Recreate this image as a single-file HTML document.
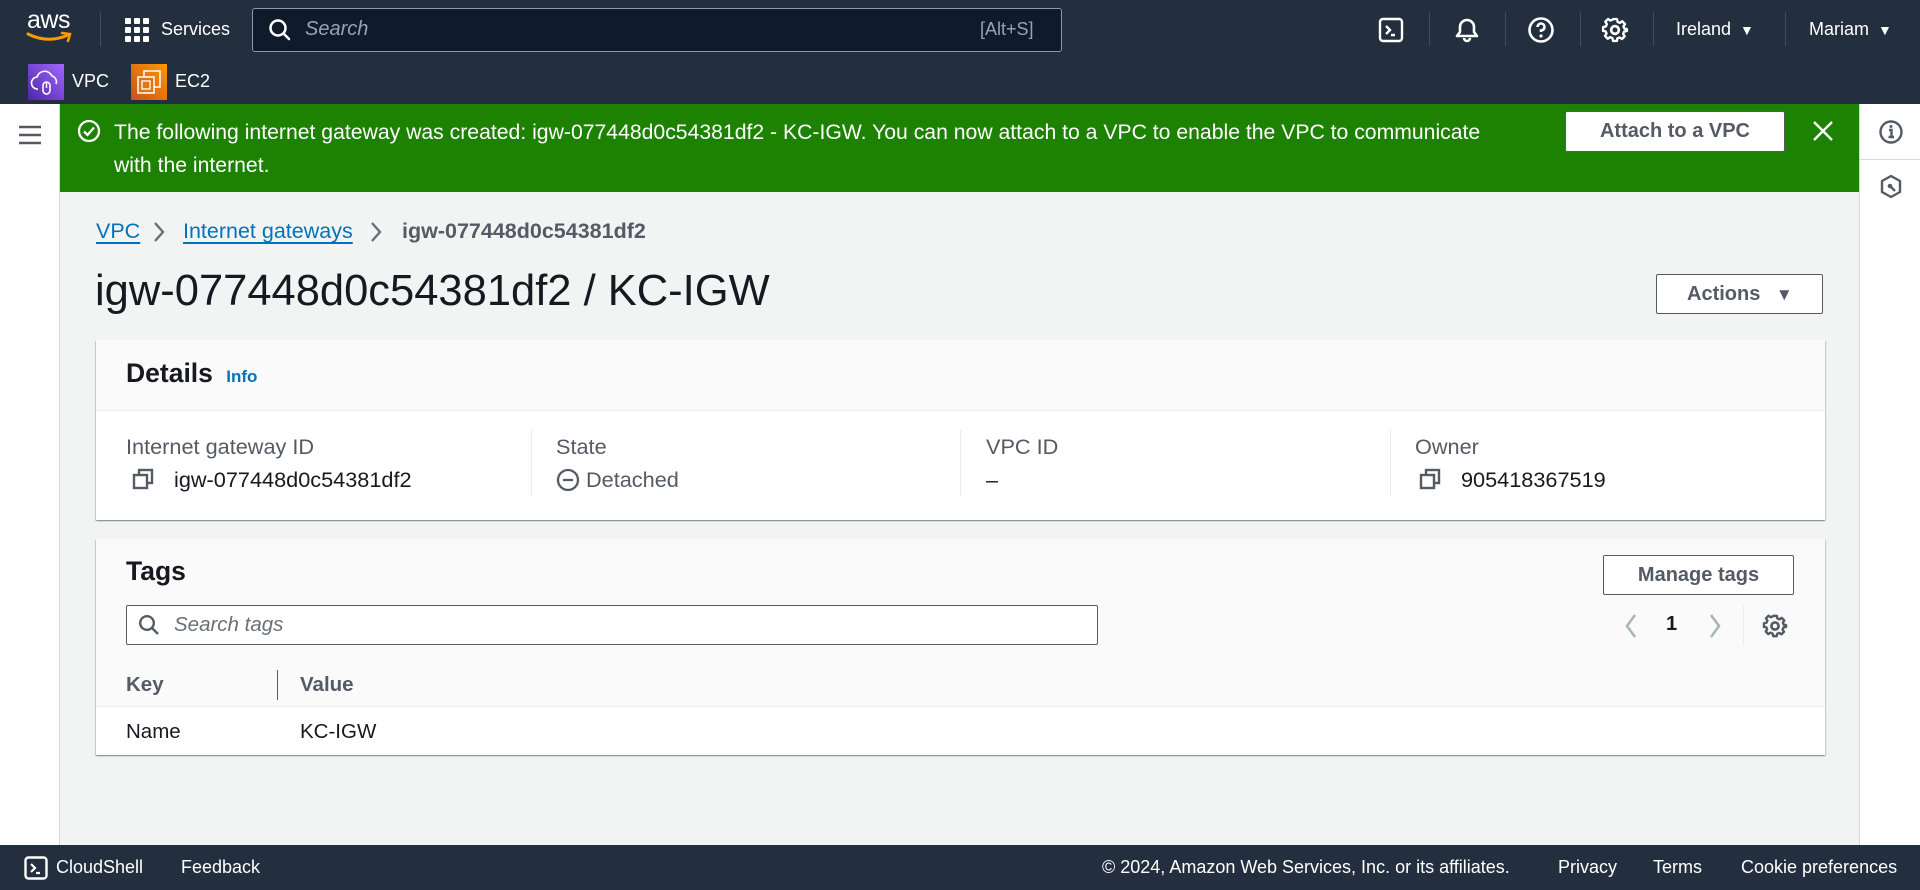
<!DOCTYPE html>
<html><head><meta charset="utf-8"><style>
*{box-sizing:border-box;margin:0;padding:0}
body{width:1920px;height:890px;overflow:hidden;font-family:"Liberation Sans",Arial,sans-serif;background:#f2f3f3;color:#16191f;position:relative}
.a{position:absolute}
.nav{left:0;top:0;width:1920px;height:104px;background:#232f3e}
.nt{color:#fff;font-size:18px;white-space:nowrap}
.div{width:1px;height:34px;background:#414d5c;top:12px}
.lbl{color:#545b64;font-size:21.7px}
.val{font-size:21.7px;color:#16191f}
</style></head><body>
<div class="a nav"></div>
<div class="a nt" style="left:27px;top:6px;font-size:25px;letter-spacing:-0.5px">aws</div>
<svg class="a" style="left:26px;top:30px" width="48" height="16" viewBox="0 0 48 16"><path d="M2 4 Q22 14 42 5" stroke="#ff9900" stroke-width="3" fill="none" stroke-linecap="round"/><path d="M36 3 L44 4 L42 11" stroke="#ff9900" stroke-width="2.5" fill="none" stroke-linecap="round"/></svg>
<div class="a div" style="left:100px"></div>
<svg class="a" style="left:125px;top:18px" width="24" height="24"><g fill="#fff"><rect x="0" y="0" width="6" height="6" rx="1"/><rect x="9" y="0" width="6" height="6" rx="1"/><rect x="18" y="0" width="6" height="6" rx="1"/><rect x="0" y="9" width="6" height="6" rx="1"/><rect x="9" y="9" width="6" height="6" rx="1"/><rect x="18" y="9" width="6" height="6" rx="1"/><rect x="0" y="18" width="6" height="6" rx="1"/><rect x="9" y="18" width="6" height="6" rx="1"/><rect x="18" y="18" width="6" height="6" rx="1"/></g></svg>
<div class="a nt" style="left:161px;top:19px">Services</div>
<div class="a" style="left:252px;top:8px;width:810px;height:44px;background:#0f1b2a;border:1px solid #8d99a8;border-radius:3px"></div>
<svg class="a" style="left:268px;top:18px" width="24" height="24"><circle cx="10" cy="10" r="7.5" stroke="#fff" stroke-width="2.5" fill="none"/><path d="M15.5 15.5 L21 21" stroke="#fff" stroke-width="2.5" stroke-linecap="round"/></svg>
<div class="a nt" style="left:305px;top:18px;font-size:20px;font-style:italic;color:#95a5b5">Search</div>
<div class="a nt" style="left:980px;top:19px;color:#95a5b5">[Alt+S]</div>
<svg class="a" style="left:1378px;top:17px" width="26" height="26"><rect x="2" y="2" width="22" height="22" rx="3" stroke="#fff" stroke-width="2.4" fill="none"/><path d="M8 9 L12 13 L8 17 M13 18 H17" stroke="#fff" stroke-width="2.4" fill="none"/></svg>
<div class="a div" style="left:1429px"></div>
<svg class="a" style="left:1453px;top:15px" width="28" height="30"><path d="M4 21 H24 L21 17 V12 A7 7 0 0 0 7 12 V17 Z" stroke="#fff" stroke-width="2.6" fill="none" stroke-linejoin="round"/><path d="M11 23 A3 3 0 0 0 17 23" stroke="#fff" stroke-width="2.6" fill="none"/></svg>
<div class="a div" style="left:1505px"></div>
<svg class="a" style="left:1527px;top:16px" width="28" height="28"><circle cx="14" cy="14" r="11.5" stroke="#fff" stroke-width="2.6" fill="none"/><path d="M10.5 11 A3.5 3.5 0 1 1 14 14.5 V16" stroke="#fff" stroke-width="2.6" fill="none"/><circle cx="14" cy="20" r="1.6" fill="#fff"/></svg>
<div class="a div" style="left:1580px"></div>
<svg class="a" style="left:1601px;top:16px" width="28" height="28" viewBox="0 0 24 24"><path d="M10 2h4l.6 2.8 2.3 1 2.4-1.6 2.8 2.8-1.6 2.4 1 2.3L24 12l0 2-2.8.6-1 2.3 1.6 2.4-2.8 2.8-2.4-1.6-2.3 1L14 24h-4l-.6-2.8-2.3-1-2.4 1.6-2.8-2.8 1.6-2.4-1-2.3L0 14v-4l2.8-.6 1-2.3-1.6-2.4 2.8-2.8 2.4 1.6 2.3-1z" transform="translate(12 12) scale(.85) translate(-12 -13)" stroke="#fff" stroke-width="2.4" fill="none" stroke-linejoin="round"/><circle cx="12" cy="12" r="3.3" stroke="#fff" stroke-width="2.3" fill="none"/></svg>
<div class="a div" style="left:1653px"></div>
<div class="a nt" style="left:1676px;top:19px">Ireland <span style="font-size:14px;margin-left:4px">▼</span></div>
<div class="a div" style="left:1785px"></div>
<div class="a nt" style="left:1809px;top:19px">Mariam <span style="font-size:14px;margin-left:4px">▼</span></div>
<div class="a" style="left:28px;top:64px;width:36px;height:36px;background:linear-gradient(45deg,#4d27aa,#a166ff)"></div>
<svg class="a" style="left:28px;top:64px" width="36" height="36"><path d="M10 25 A6 6 0 0 1 9 13 A8 8 0 0 1 24 12 A6 6 0 0 1 28 20" stroke="#fff" stroke-width="1.6" fill="none"/><rect x="15" y="18" width="7" height="12" rx="3.5" stroke="#fff" stroke-width="1.6" fill="none"/><path d="M18.5 18 V24" stroke="#fff" stroke-width="1.4"/></svg>
<div class="a nt" style="left:72px;top:71px">VPC</div>
<div class="a" style="left:131px;top:64px;width:36px;height:36px;background:linear-gradient(45deg,#c8511b,#ff9900)"></div>
<svg class="a" style="left:131px;top:64px" width="36" height="36"><rect x="13" y="7" width="16" height="16" stroke="#fff" stroke-width="1.5" fill="none"/><rect x="7" y="13" width="16" height="16" stroke="#fff" stroke-width="1.5" fill="#e07512"/><rect x="11" y="17" width="8" height="8" stroke="#fff" stroke-width="1.3" fill="none"/></svg>
<div class="a nt" style="left:175px;top:71px">EC2</div>
<div class="a" style="left:0;top:104px;width:60px;height:741px;background:#fff;border-right:1px solid #d5dbdb"></div>
<svg class="a" style="left:18px;top:124px" width="24" height="22"><path d="M1 3 H23 M1 11 H23 M1 19 H23" stroke="#545b64" stroke-width="2.6"/></svg>
<div class="a" style="left:1859px;top:104px;width:61px;height:741px;background:#fff;border-left:1px solid #d5dbdb"></div>
<div class="a" style="left:1859px;top:159px;width:61px;height:1px;background:#d5dbdb"></div>
<svg class="a" style="left:1878px;top:119px" width="26" height="26"><circle cx="13" cy="13" r="10.5" stroke="#545b64" stroke-width="2.4" fill="none"/><path d="M11 11 H13.5 V18 M10.5 18 H16" stroke="#545b64" stroke-width="2.4" fill="none"/><circle cx="13" cy="7.5" r="1.5" fill="#545b64"/></svg>
<svg class="a" style="left:1879px;top:174px" width="24" height="26"><path d="M12 2 L21 7 V18 L12 23 L3 18 V7 Z" stroke="#545b64" stroke-width="2.4" fill="none" stroke-linejoin="round"/><circle cx="11" cy="12" r="2.3" fill="#545b64"/><path d="M12 13 L16 17" stroke="#545b64" stroke-width="2.4"/></svg>
<div class="a" style="left:60px;top:104px;width:1799px;height:88px;background:#1d8102"></div>
<svg class="a" style="left:77px;top:119px" width="24" height="24"><circle cx="12" cy="12" r="10" stroke="#fff" stroke-width="2.3" fill="none"/><path d="M7 12.5 L10.5 16 L17 8.5" stroke="#fff" stroke-width="2.3" fill="none"/></svg>
<div class="a" style="left:114px;top:116px;width:1400px;color:#fff;font-size:21.2px;line-height:33px">The following internet gateway was created: igw-077448d0c54381df2 - KC-IGW. You can now attach to a VPC to enable the VPC to communicate with the internet.</div>
<div class="a" style="left:1565px;top:111px;width:220px;height:41px;background:#fff;border:1px solid #545b64;border-radius:2px;color:#545b64;font-weight:bold;font-size:20px;text-align:center;line-height:39px">Attach to a VPC</div>
<svg class="a" style="left:1812px;top:120px" width="22" height="22"><path d="M2 2 L20 20 M20 2 L2 20" stroke="#fff" stroke-width="2.4"/></svg>
<div class="a" style="left:96px;top:219px;font-size:21.5px;color:#0073bb;text-decoration:underline;text-underline-offset:4px">VPC</div>
<svg class="a" style="left:152px;top:221px" width="14" height="22"><path d="M3 2 L11 11 L3 20" stroke="#687078" stroke-width="2.4" fill="none"/></svg>
<div class="a" style="left:183px;top:219px;font-size:21.5px;color:#0073bb;text-decoration:underline;text-underline-offset:4px">Internet gateways</div>
<svg class="a" style="left:369px;top:221px" width="14" height="22"><path d="M3 2 L11 11 L3 20" stroke="#687078" stroke-width="2.4" fill="none"/></svg>
<div class="a" style="left:402px;top:219px;font-size:21.5px;color:#545b64;font-weight:bold">igw-077448d0c54381df2</div>
<div class="a" style="left:95px;top:267px;font-size:43.5px;color:#16191f">igw-077448d0c54381df2 / KC-IGW</div>
<div class="a" style="left:1656px;top:274px;width:167px;height:40px;background:#fff;border:1px solid #545b64;border-radius:2px;color:#545b64;font-weight:bold;font-size:20px;line-height:38px;padding-left:30px">Actions <span style="font-size:17px;margin-left:10px">▼</span></div>
<div class="a" style="left:96px;top:340px;width:1729px;height:180px;background:#fff;box-shadow:0 1px 1px 0 rgba(0,28,36,.3),1px 1px 1px 0 rgba(0,28,36,.15),-1px 1px 1px 0 rgba(0,28,36,.15)">
 <div style="height:71px;background:#fafafa;border-bottom:1px solid #eaeded"></div>
</div>
<div class="a" style="left:126px;top:358px;font-size:26.5px;font-weight:bold">Details <span style="font-size:17px;color:#0073bb;margin-left:6px">Info</span></div>
<div class="a" style="left:531px;top:430px;width:1px;height:66px;background:#eaeded"></div>
<div class="a" style="left:960px;top:430px;width:1px;height:66px;background:#eaeded"></div>
<div class="a" style="left:1390px;top:430px;width:1px;height:66px;background:#eaeded"></div>
<div class="a lbl" style="left:126px;top:434px">Internet gateway ID</div>
<svg class="a" style="left:132px;top:468px" width="22" height="22"><rect x="7" y="2" width="13" height="13" stroke="#545b64" stroke-width="2.4" fill="none"/><rect x="2" y="7" width="13" height="13" stroke="#545b64" stroke-width="2.4" fill="#fff"/></svg>
<div class="a val" style="left:174px;top:467px">igw-077448d0c54381df2</div>
<div class="a lbl" style="left:556px;top:434px">State</div>
<svg class="a" style="left:556px;top:468px" width="24" height="24"><circle cx="12" cy="12" r="10" stroke="#545b64" stroke-width="2.3" fill="none"/><path d="M7 12 H17" stroke="#545b64" stroke-width="2.3"/></svg>
<div class="a" style="left:586px;top:467px;font-size:21.7px;color:#545b64">Detached</div>
<div class="a lbl" style="left:986px;top:434px">VPC ID</div>
<div class="a val" style="left:986px;top:467px">–</div>
<div class="a lbl" style="left:1415px;top:434px">Owner</div>
<svg class="a" style="left:1419px;top:468px" width="22" height="22"><rect x="7" y="2" width="13" height="13" stroke="#545b64" stroke-width="2.4" fill="none"/><rect x="2" y="7" width="13" height="13" stroke="#545b64" stroke-width="2.4" fill="#fff"/></svg>
<div class="a val" style="left:1461px;top:467px">905418367519</div>
<div class="a" style="left:96px;top:539px;width:1729px;height:216px;background:#fff;box-shadow:0 1px 1px 0 rgba(0,28,36,.3),1px 1px 1px 0 rgba(0,28,36,.15),-1px 1px 1px 0 rgba(0,28,36,.15)">
 <div style="height:168px;background:#fafafa;border-bottom:1px solid #eaeded"></div>
</div>
<div class="a" style="left:126px;top:556px;font-size:26.5px;font-weight:bold">Tags</div>
<div class="a" style="left:1603px;top:555px;width:191px;height:40px;background:#fff;border:1px solid #545b64;border-radius:2px;color:#545b64;font-weight:bold;font-size:20px;text-align:center;line-height:38px">Manage tags</div>
<div class="a" style="left:126px;top:605px;width:972px;height:40px;background:#fff;border:1px solid #545b64;border-radius:2px"></div>
<svg class="a" style="left:138px;top:614px" width="22" height="22"><circle cx="9" cy="9" r="6.8" stroke="#545b64" stroke-width="2.4" fill="none"/><path d="M14 14 L20 20" stroke="#545b64" stroke-width="2.4"/></svg>
<div class="a" style="left:174px;top:613px;font-size:20.5px;font-style:italic;color:#687078">Search tags</div>
<svg class="a" style="left:1623px;top:612px" width="16" height="28"><path d="M12 3 L4 14 L12 25" stroke="#aab7b8" stroke-width="2.6" fill="none"/></svg>
<div class="a" style="left:1666px;top:613px;font-size:20px;font-weight:bold">1</div>
<svg class="a" style="left:1707px;top:612px" width="16" height="28"><path d="M4 3 L12 14 L4 25" stroke="#aab7b8" stroke-width="2.6" fill="none"/></svg>
<div class="a" style="left:1743px;top:605px;width:1px;height:40px;background:#eaeded"></div>
<svg class="a" style="left:1762px;top:613px" width="26" height="26" viewBox="0 0 24 24"><path d="M10 2h4l.6 2.8 2.3 1 2.4-1.6 2.8 2.8-1.6 2.4 1 2.3L24 12l0 2-2.8.6-1 2.3 1.6 2.4-2.8 2.8-2.4-1.6-2.3 1L14 24h-4l-.6-2.8-2.3-1-2.4 1.6-2.8-2.8 1.6-2.4-1-2.3L0 14v-4l2.8-.6 1-2.3-1.6-2.4 2.8-2.8 2.4 1.6 2.3-1z" transform="translate(12 12) scale(.85) translate(-12 -13)" stroke="#545b64" stroke-width="2.6" fill="none" stroke-linejoin="round"/><circle cx="12" cy="12" r="3.3" stroke="#545b64" stroke-width="2.5" fill="none"/></svg>
<div class="a" style="left:277px;top:670px;width:1px;height:30px;background:#545b64"></div>
<div class="a" style="left:126px;top:673px;font-size:20.5px;font-weight:bold;color:#545b64">Key</div>
<div class="a" style="left:300px;top:673px;font-size:20.5px;font-weight:bold;color:#545b64">Value</div>
<div class="a val" style="left:126px;top:720px;font-size:20.5px">Name</div>
<div class="a val" style="left:300px;top:720px;font-size:20.5px">KC-IGW</div>
<div class="a" style="left:0;top:845px;width:1920px;height:45px;background:#232f3e"></div>
<svg class="a" style="left:24px;top:856px" width="24" height="24"><rect x="1.5" y="1.5" width="21" height="21" rx="3" stroke="#fff" stroke-width="2.4" fill="none"/><path d="M7 8 L11 12 L7 16 M12 17 H16" stroke="#fff" stroke-width="2.2" fill="none"/></svg>
<div class="a nt" style="left:56px;top:857px">CloudShell</div>
<div class="a nt" style="left:181px;top:857px">Feedback</div>
<div class="a nt" style="left:1102px;top:857px">© 2024, Amazon Web Services, Inc. or its affiliates.</div>
<div class="a nt" style="left:1558px;top:857px">Privacy</div>
<div class="a nt" style="left:1653px;top:857px">Terms</div>
<div class="a nt" style="left:1741px;top:857px">Cookie preferences</div>
</body></html>
